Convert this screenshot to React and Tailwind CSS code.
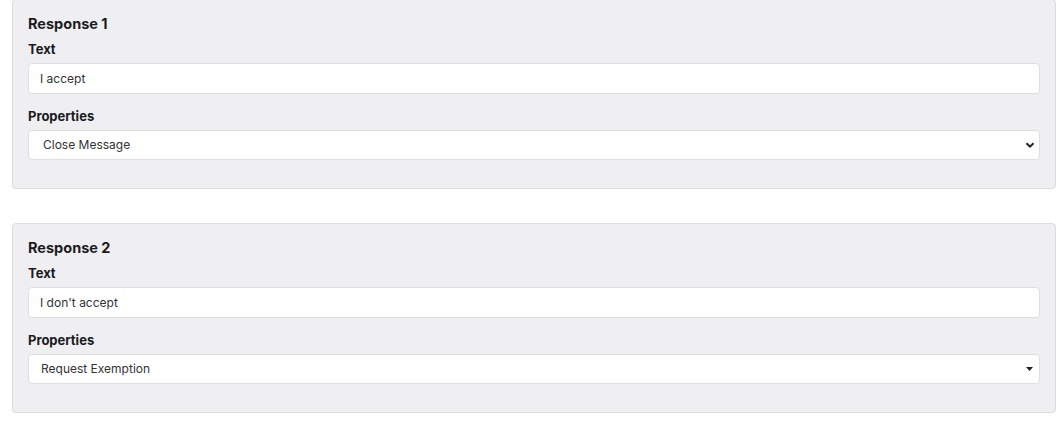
import React from "react";

const responses = [
  { id: 1, text: "I accept", property: "Close Message", caret: "chevron" },
  { id: 2, text: "I don't accept", property: "Request Exemption", caret: "triangle" },
];

function Caret({ type }) {
  if (type === "chevron") {
    return (
      <svg className="absolute right-[5px] top-1/2 -translate-y-1/2 h-[10px] w-[10px] pointer-events-none" viewBox="0 0 10 10">
        <path d="M1.5 3.2 L5 6.7 L8.5 3.2" fill="none" stroke="#222" strokeWidth="2" />
      </svg>
    );
  }
  return (
    <svg className="absolute right-[7px] top-1/2 -translate-y-1/2 h-[6px] w-[7px] pointer-events-none" viewBox="0 0 7 6">
      <path d="M0 1 L7 1 L3.5 5 Z" fill="#222" />
    </svg>
  );
}

function ResponseCard({ r }) {
  return (
    <div className="bg-[#efeff1] border border-[#dcdce0] rounded-[4px] pl-[15px] pr-[15px] pt-[14px] pb-[28px]">
      <h3 className="text-[14.5px] font-bold text-[#1b1b1f] leading-5 mb-[7px]">Response {r.id}</h3>
      <label className="block text-[13px] font-bold text-[#1b1b1f] leading-4 mb-[6px]">Text</label>
      <input
        type="text"
        defaultValue={r.text}
        className="w-full h-[31px] bg-white border border-[#dedee2] rounded-[4px] px-[11px] text-[12px] text-[#333] outline-none"
      />
      <label className="block text-[13px] font-bold text-[#1b1b1f] leading-4 mt-[14px] mb-[6px]">Properties</label>
      <div className="relative">
        <select
          defaultValue={r.property}
          className={`w-full h-[30px] appearance-none bg-white border border-[#dedee2] rounded-[4px] ${r.caret === "chevron" ? "pl-[14px]" : "pl-[12px]"} text-[12px] text-[#333] outline-none`}
        >
          <option>{r.property}</option>
        </select>
        <Caret type={r.caret} />
      </div>
    </div>
  );
}

export default function App() {
  return (
    <div className="min-h-screen bg-white font-['Inter',sans-serif] pl-[12px] pr-[7px] -mt-px">
      <div className="flex flex-col gap-[34px]">
        {responses.map((r) => (
          <ResponseCard key={r.id} r={r} />
        ))}
      </div>
    </div>
  );
}
